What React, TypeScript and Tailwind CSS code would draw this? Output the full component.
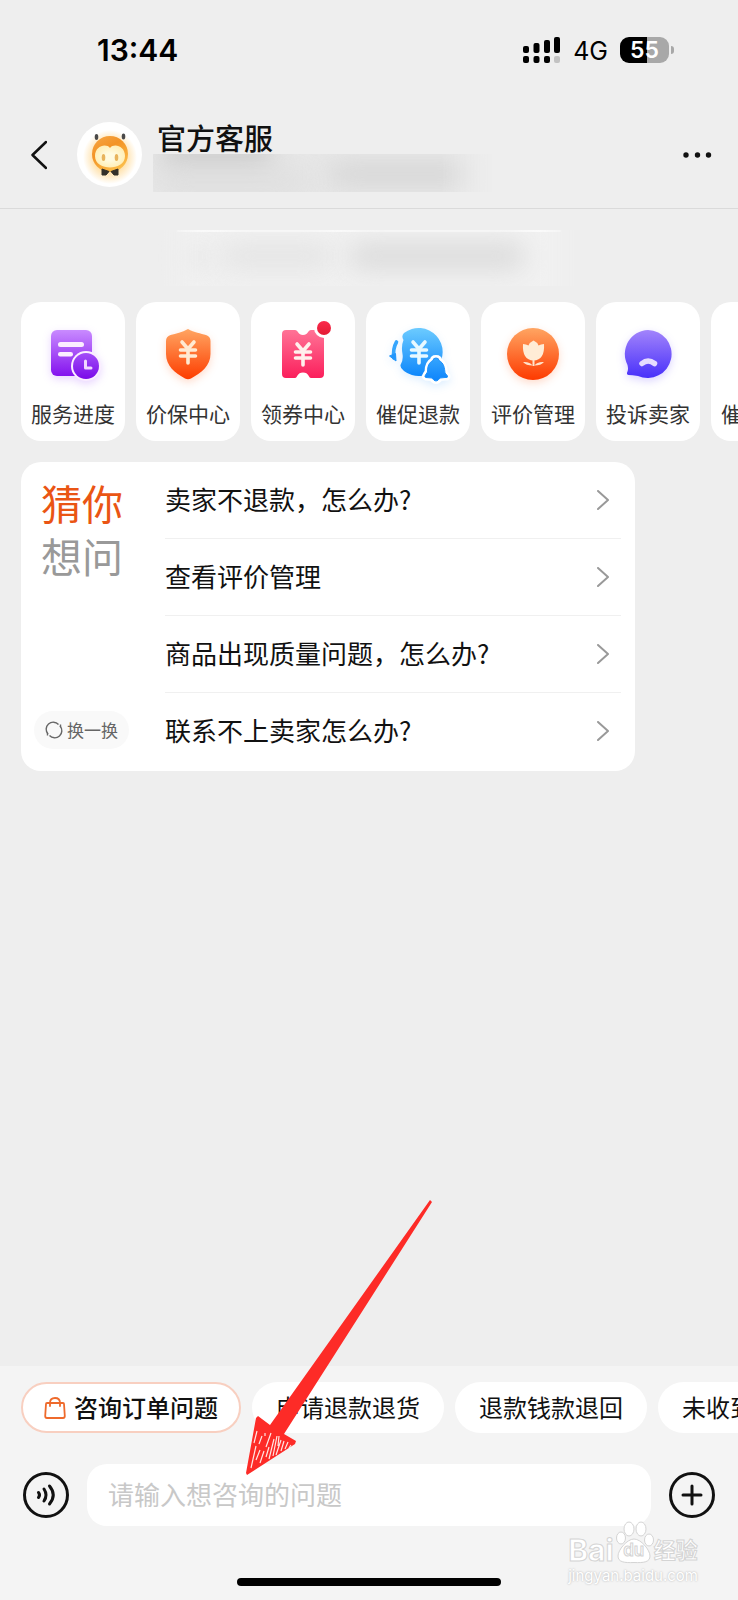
import { ReactNode, useState } from 'react'

function Yuan({ x, y, color }: { x: number; y: number; color: string }) {
  return (
    <g transform={`translate(${x} ${y})`} stroke={color} strokeWidth="3.6" strokeLinecap="round" strokeLinejoin="round" fill="none">
      <path d="M-6 -10 L0 -3 L6 -10" />
      <path d="M-7.5 -2 H7.5 M-7.5 4 H7.5 M0 -3 V11" />
    </g>
  )
}

function Gradient({ id, from, to }: { id: string; from: string; to: string }) {
  return (
    <linearGradient id={id} x1="0" y1="0" x2="0" y2="1">
      <stop offset="0" stopColor={from} />
      <stop offset="1" stopColor={to} />
    </linearGradient>
  )
}

function ServiceIcon({ children, glow }: { children: ReactNode; glow: string }) {
  return (
    <svg className={`w-16 h-16 overflow-visible ${glow}`} viewBox="0 0 64 64" fill="none" aria-hidden="true">
      {children}
    </svg>
  )
}

const services = [
  {
    label: '服务进度',
    icon: (
      <ServiceIcon glow="drop-shadow-[0_3px_4px_rgba(150,60,255,0.22)]">
        <defs>
          <Gradient id="doc" from="#c98bff" to="#8412ee" />
          <Gradient id="clock" from="#a24df8" to="#7a0be8" />
        </defs>
        <rect x="10" y="8" width="41" height="46" rx="6" fill="url(#doc)" />
        <rect x="17" y="20" width="26" height="5" rx="2.5" fill="#fbeeff" />
        <rect x="17" y="30" width="15" height="4.5" rx="2.2" fill="#fbeeff" />
        <circle cx="45" cy="44" r="15" fill="#fbeeff" />
        <circle cx="45" cy="44" r="13" fill="url(#clock)" />
        <path d="M44.5 39 V46 H50" stroke="#f0d8ff" strokeWidth="3" strokeLinecap="round" strokeLinejoin="round" />
      </ServiceIcon>
    ),
  },
  {
    label: '价保中心',
    icon: (
      <ServiceIcon glow="drop-shadow-[0_3px_4px_rgba(255,90,20,0.22)]">
        <defs>
          <Gradient id="shield" from="#ffa562" to="#fd3d00" />
        </defs>
        <path d="M32 7 C38 10.500 45 11.500 50 13 Q54.500 14.500 54.500 19 V32 C54.500 44 45 51 35 56.500 Q32 58 29 56.500 C19 51 10 44 10 32 V19 Q10 14.500 14.500 13 C20 11.500 26 10.500 32 7Z" fill="url(#shield)" />
        <Yuan x={32} y={30} color="#ffead2" />
      </ServiceIcon>
    ),
  },
  {
    label: '领券中心',
    icon: (
      <ServiceIcon glow="">
        <defs>
          <Gradient id="ticket" from="#ff7396" to="#fb1f5c" />
          <Gradient id="dot" from="#fb2a4c" to="#e31b34" />
        </defs>
        <path d="M15 8 H24 C27 8 27 13 32 13 C37 13 37 8 40 8 H49 Q53 8 53 12 V52 Q53 56 49 56 H40 C37.500 56 38 50.500 32 50.500 C26 50.500 26.500 56 24 56 H15 Q11 56 11 52 V12 Q11 8 15 8Z" fill="url(#ticket)" />
        <Yuan x={32} y={32} color="#fff0ec" />
        <circle cx="53" cy="6" r="10" fill="#fff" />
        <circle cx="53" cy="6" r="7" fill="url(#dot)" />
      </ServiceIcon>
    ),
  },
  {
    label: '催促退款',
    icon: (
      <ServiceIcon glow="drop-shadow-[0_3px_4px_rgba(30,140,255,0.15)]">
        <defs>
          <Gradient id="refund" from="#6ccbff" to="#0e87fb" />
          <Gradient id="bell" from="#35a5fd" to="#0e84fb" />
        </defs>
        <path d="M18 11 A24 24 0 1 1 18 49 Q14 46 14.500 43 Q17.500 38 16.500 32 Q15 24 17.500 18 Q15 14 18 11Z" fill="url(#refund)" />
        <path d="M10.500 20 Q6.500 27 8 36" stroke="#35a5fd" strokeWidth="3.600" strokeLinecap="round" />
        <path d="M3.500 34 L9.500 31.500 L10 39 Z" fill="#2196fc" stroke="#2196fc" strokeLinejoin="round" />
        <Yuan x={33} y={30} color="#e8f9ff" />
        <path
          d="M50 36 Q53 36 53 38.500 C58 41 58.500 46 59 51 L61.500 54 Q62 56 59 55.500 L54 56 Q50 62 46 56 L40 55.500 Q38 55 39.500 53 L41.500 50 C41.500 44 43 40.500 47 38.500 Q47 36 50 36Z"
          fill="#fff"
          stroke="#fff"
          strokeWidth="6"
        />
        <path
          d="M50 36 Q53 36 53 38.500 C58 41 58.500 46 59 51 L61.500 54 Q62 56 59 55.500 L54 56 Q50 62 46 56 L40 55.500 Q38 55 39.500 53 L41.500 50 C41.500 44 43 40.500 47 38.500 Q47 36 50 36Z"
          fill="url(#bell)"
          stroke="#1d91fc"
        />
      </ServiceIcon>
    ),
  },
  {
    label: '评价管理',
    icon: (
      <ServiceIcon glow="drop-shadow-[0_3px_4px_rgba(255,90,20,0.22)]">
        <defs>
          <Gradient id="review" from="#ffa562" to="#fd3a00" />
        </defs>
        <circle cx="32" cy="32" r="26" fill="url(#review)" />
        <path d="M22 22 Q25 22 27.500 23.500 Q29 20 32.500 18.500 Q36 20 37.500 23.500 Q40 22 43 22 Q44 38 32.500 38.500 Q21 38 22 22Z" fill="#ffecd6" />
        <path d="M32.500 38 V44" stroke="#ffe3cb" strokeWidth="2" />
        <path d="M22 40 Q29 39.500 31.500 43.500 Q25 43.500 22 40Z M43 40 Q36 39.500 33.500 43.500 Q40 43.500 43 40Z" fill="#ffe3cb" />
      </ServiceIcon>
    ),
  },
  {
    label: '投诉卖家',
    icon: (
      <ServiceIcon glow="drop-shadow-[0_3px_4px_rgba(90,60,255,0.22)]">
        <defs>
          <Gradient id="complain" from="#a284fb" to="#4830fa" />
        </defs>
        <path d="M32 8 A24 24 0 1 1 22 54 Q16 53 12.500 53 Q10 52.500 11.500 49.500 Q12.500 47 11.500 43 A24 24 0 0 1 32 8Z" fill="url(#complain)" />
        <path d="M26 41.500 Q32 36.500 38.500 41.500" stroke="#e6dcff" strokeWidth="5.500" strokeLinecap="round" />
      </ServiceIcon>
    ),
  },
  {
    label: '催促发货',
    icon: null,
  },
]

const questions = [
  '卖家不退款，怎么办?',
  '查看评价管理',
  '商品出现质量问题，怎么办?',
  '联系不上卖家怎么办?',
]

const quickReplies = ['申请退款退货', '退款钱款退回', '未收到退款']

function StatusBar() {
  return (
    <div className="flex h-[100px] items-center justify-between pl-[97px] pr-16 font-['Inter',sans-serif] text-black">
      <span className="text-[30px] font-semibold leading-9">13:44</span>
      <div className="flex items-center">
        <svg className="w-[38px] h-[26px]" viewBox="0 0 38 26" aria-hidden="true">
          <rect x="0" y="9" width="6" height="7" rx="2" />
          <rect x="10.500" y="6" width="6" height="10" rx="2" />
          <rect x="21" y="3" width="6" height="13" rx="2" />
          <rect x="31" y="0" width="6" height="16" rx="2" />
          <rect x="0" y="19" width="6" height="7" rx="2" />
          <rect x="10.500" y="19" width="6" height="7" rx="2" />
          <rect x="21" y="19" width="6" height="7" rx="2" />
          <rect x="31" y="19" width="6" height="7" rx="2" fill="#c2c2c2" />
        </svg>
        <span className="ml-3 pt-0.5 text-[25px] leading-[30px]">4G</span>
        <div className="ml-3 flex h-[26px] w-[49px] items-center justify-center rounded-[9px] bg-[linear-gradient(90deg,#000_55%,#a8a8a8_55%)] text-[23px] font-semibold leading-[26px] text-white">
          55
        </div>
        <div className="ml-0.5 h-2 w-[3px] rounded-r-full bg-[#a8a8a8]" />
      </div>
    </div>
  )
}

function Avatar() {
  return (
    <svg className="ml-[30px] w-[65px] h-[65px] shrink-0" viewBox="0 0 65 65" role="img" aria-label="官方客服">
      <defs>
        <linearGradient id="face" x1="0.1" y1="0" x2="0.7" y2="1">
          <stop offset="0" stopColor="#f6a544" />
          <stop offset="0.4" stopColor="#f39325" />
          <stop offset="1" stopColor="#fcc04c" />
        </linearGradient>
        <radialGradient id="halo">
          <stop offset="0.6" stopColor="#ffe3b0" />
          <stop offset="1" stopColor="#fff" />
        </radialGradient>
        <radialGradient id="mask">
          <stop offset="0.3" stopColor="#fffbe0" />
          <stop offset="1" stopColor="#ffefb8" />
        </radialGradient>
      </defs>
      <circle cx="32.500" cy="32.500" r="32.500" fill="#fff" />
      <circle cx="33" cy="35" r="27" fill="url(#halo)" />
      <ellipse cx="19.500" cy="15" rx="1.800" ry="3" fill="#4a4a4a" />
      <ellipse cx="46.500" cy="14.500" rx="1.800" ry="3" fill="#4a4a4a" />
      <circle cx="33" cy="32" r="18" fill="url(#face)" />
      <path d="M33 26 C29 21 18 24 18 34 C18 42 26 45.500 33 45.500 C40 45.500 48 42 48 34 C48 24 37 21 33 26Z" fill="url(#mask)" />
      <ellipse cx="26.500" cy="35.500" rx="1.800" ry="3.500" fill="#e8b45c" />
      <ellipse cx="39.500" cy="35.500" rx="1.800" ry="3.500" fill="#e8b45c" />
      <path d="M25 47 L32 49.500 L29 53 L25 53Z M41 47 L34 49.500 L37 53 L41 53Z" fill="#33302a" stroke="#33302a" strokeLinejoin="round" />
    </svg>
  )
}

function Header() {
  return (
    <header className="border-b border-[#dadada]">
      <StatusBar />
      <div className="flex h-[108px] items-start pl-[31px] pr-[26px] pt-[22px]">
        <button type="button" aria-label="返回" className="flex h-[65px] items-center">
          <svg className="w-4 h-[30px]" viewBox="0 0 16 30" fill="none" stroke="#111" strokeWidth="2.500" strokeLinecap="round" strokeLinejoin="round">
            <path d="M15 2 L1.500 15 L15 28" />
          </svg>
        </button>
        <Avatar />
        <div className="ml-[11px]">
          <h1 className="pl-1 text-[29px] font-medium leading-[30px] text-[#111]">官方客服</h1>
          <div className="relative mt-0.5 h-[38px] w-[340px] overflow-hidden bg-[#e8e8e8] [mask-image:linear-gradient(90deg,#000_85%,transparent)]">
            <div className="absolute -top-3 left-2 h-6 w-28 rounded-full bg-[#c8c8c8] blur-md" />
            <div className="absolute left-0 top-4 h-6 w-40 rounded-full bg-[#dcdcdc] blur-lg" />
            <div className="absolute left-44 top-2 h-6 w-36 rounded-full bg-[#d6d6d6] blur-md" />
          </div>
        </div>
        <button type="button" aria-label="更多" className="ml-auto flex h-[65px] items-center">
          <svg className="w-[30px] h-2" viewBox="0 0 30 8" fill="#111">
            <circle cx="4" cy="4" r="2.700" />
            <circle cx="15.500" cy="4" r="2.700" />
            <circle cx="26.500" cy="4" r="2.700" />
          </svg>
        </button>
      </div>
    </header>
  )
}

function GuessCard() {
  return (
    <section className="mx-[21px] mt-[21px] flex max-w-[614px] rounded-[20px] bg-white">
      <div className="flex w-[144px] shrink-0 flex-col items-start justify-between pb-[22px] pl-[13px] pt-3.5">
        <h2 className="pl-[7px] text-[41px] leading-[53px] text-[#999]">
          <span className="block text-[#ea5514]">猜你</span>
          想问
        </h2>
        <button type="button" className="flex h-[38px] items-center gap-1 whitespace-nowrap rounded-full bg-[#f9f9f9] px-[11px] text-[17px] text-[#666]">
          <svg className="w-[18px] h-[18px]" viewBox="0 0 18 18" fill="none" stroke="#666" strokeWidth="1.400">
            <path d="M3 13 A7 7 0 0 1 13.500 3.500 M15 5 A7 7 0 0 1 4.500 14.500" />
            <path d="M15.500 3.500 V6 M2.500 14.500 V12" />
          </svg>
          换一换
        </button>
      </div>
      <ul className="mr-3.5 flex-1 divide-y divide-[#f0f0f0] pb-0.5">
        {questions.map((question) => (
          <li key={question}>
            <button type="button" className="flex h-[76px] w-full items-center justify-between pr-3 text-left text-[26px] text-[#111]">
              <span className="pb-1">{question}</span>
              <svg className="w-3 h-5" viewBox="0 0 12 20" fill="none" stroke="#999" strokeWidth="2" strokeLinecap="round" strokeLinejoin="round">
                <path d="M1 1 L11 10 L1 19" />
              </svg>
            </button>
          </li>
        ))}
      </ul>
    </section>
  )
}

function PointerArrow() {
  return (
    <svg className="pointer-events-none absolute -top-[170px] left-[240px] w-[200px] h-[290px]" viewBox="240 1196 200 290" fill="none" aria-hidden="true">
      <path
        d="M430 1200 L432 1202 L284 1434 L296 1441 L295 1444 L247 1475 L246 1473 L256 1418 L258 1416 L270 1425Z"
        fill="#fd2b27"
      />
      <path
        d="M257 1431 L254 1443 M262 1436 L259 1444 M265 1433 L265 1436 M271 1433 L266 1447 M256 1446 L251 1468 M260 1450 L256 1460 M264 1451 L260 1463 M269 1447 L266 1457 M274 1439 L269 1459 M277 1436 L273 1456 M281 1440 L276 1455 M279 1436 L278 1446 M284 1441 L281 1451 M288 1442 L285 1449 M291 1445 L289 1448"
        stroke="#ffe5e3"
        strokeWidth="1.200"
      />
    </svg>
  )
}

function Watermark() {
  return (
    <div className="pointer-events-none absolute right-10 top-[154px] font-['Inter','Noto_Sans_CJK_SC',sans-serif] text-white">
      <div className="flex h-11 items-end [-webkit-text-stroke:1px_#d4d4d4]">
        <span className="text-[30px] font-bold leading-7">Bai</span>
        <div className="relative h-11 w-[40px]">
          <svg className="absolute inset-0 w-[40px] h-11" viewBox="0 0 40 44" fill="#fff" stroke="#d4d4d4" aria-hidden="true">
            <ellipse cx="7" cy="18" rx="4.500" ry="6" />
            <ellipse cx="15" cy="9" rx="5" ry="7" />
            <ellipse cx="27" cy="9" rx="5" ry="7" />
            <ellipse cx="35" cy="20" rx="4.500" ry="6" />
            <path d="M20 19 C27 19 36 30 36 36 C36 42 30 43 20 42.500 C10 43 4 42 4 36 C4 30 13 19 20 19Z" />
          </svg>
          <span className="absolute inset-x-0 bottom-1 text-center text-[17px] font-semibold leading-5">du</span>
        </div>
        <span className="text-[22px] font-bold leading-7">经验</span>
      </div>
      <div className="text-[15px] leading-6 [text-shadow:0_0_2px_#aaa]">jingyan.baidu.com</div>
    </div>
  )
}

function Footer() {
  const [message, setMessage] = useState('')

  return (
    <footer className="relative bg-[#f4f4f4] pt-4">
      <div className="flex gap-[11px] overflow-hidden pl-[21px] text-[24px] text-[#111]">
        <button type="button" className="flex h-[51px] shrink-0 items-center gap-2 rounded-full border-2 border-[#f8cfc0] bg-white px-[21px] font-medium">
          <svg className="w-[22px] h-6" viewBox="0 0 22 24" fill="none" stroke="#ee6a2c" strokeWidth="1.800" strokeLinejoin="round" strokeLinecap="round">
            <path d="M3 7 H19 Q20 7 20 8 L20.800 20 Q20.800 22 19 22 H3 Q1.200 22 1.200 20 L2 8 Q2 7 3 7Z" />
            <path d="M6 10 V7 Q6 2 11 2 Q16 2 16 7 V10" />
          </svg>
          <span className="pb-0.5">咨询订单问题</span>
        </button>
        {quickReplies.map((reply) => (
          <button key={reply} type="button" className="h-[51px] shrink-0 rounded-full bg-white px-6 pb-0.5">
            {reply}
          </button>
        ))}
      </div>

      <div className="mt-[31px] flex items-center px-[23px]">
        <button type="button" aria-label="语音输入" className="shrink-0">
          <svg className="w-[46px] h-[46px]" viewBox="0 0 46 46" fill="none" stroke="#111" strokeWidth="3" strokeLinecap="round">
            <circle cx="23" cy="23" r="21.500" />
            <path d="M15.500 20.500 Q17.500 23 15.500 25.500" />
            <path d="M21 17 Q25 23 21 29" />
            <path d="M26.500 14 Q34 23 26.500 32" />
          </svg>
        </button>
        <input
          type="text"
          aria-label="请输入想咨询的问题"
          placeholder="请输入想咨询的问题"
          value={message}
          onChange={(e) => setMessage(e.target.value)}
          className="mx-[18px] h-[62px] min-w-0 flex-1 rounded-[20px] bg-white px-[21px] pb-1 text-[26px] text-[#111] outline-none placeholder:text-[#c8c8c8]"
        />
        <button type="button" aria-label="添加" className="shrink-0">
          <svg className="w-[46px] h-[46px]" viewBox="0 0 46 46" fill="none" stroke="#111" strokeWidth="3" strokeLinecap="round">
            <circle cx="23" cy="23" r="21.500" />
            <path d="M23 14 V32 M14 23 H32" />
          </svg>
        </button>
      </div>

      <div className="mx-auto mb-3.5 mt-[52px] h-2 w-[264px] rounded-full bg-black" />
      <Watermark />
      <PointerArrow />
    </footer>
  )
}

export default function App() {
  return (
    <div className="flex min-h-screen flex-col overflow-hidden bg-[#eee] font-['Noto_Sans_CJK_SC',sans-serif]">
      <Header />
      <main className="flex-1 pt-[21px]">
        {/* 打码的系统提示 */}
        <div className="relative mx-auto h-[56px] w-[424px] overflow-hidden bg-[#f1f1f1] [mask-image:linear-gradient(90deg,transparent,#000_10%,#000_90%,transparent)]">
          <div className="mx-5 h-0.5 rounded-full bg-[#fbfbfb]" />
          <div className="absolute left-6 top-4 h-6 w-8 rounded-full bg-[#e9e9e9] blur-md" />
          <div className="absolute left-16 top-3 h-7 w-28 rounded-full bg-[#e5e5e5] blur-md" />
          <div className="absolute left-48 top-3 h-7 w-44 rounded-full bg-[#dcdcdc] blur-md" />
        </div>

        <nav className="mt-4 flex gap-[11px] overflow-hidden pl-[21px]">
          {services.map((service) => (
            <button
              key={service.label}
              type="button"
              className="flex h-[139px] w-[104px] shrink-0 flex-col items-center rounded-[20px] bg-white pt-5"
            >
              <span className="h-16 w-16">{service.icon}</span>
              <span className="mt-3 whitespace-nowrap text-[21px] leading-[30px] text-[#333]">{service.label}</span>
            </button>
          ))}
        </nav>

        <GuessCard />
      </main>
      <Footer />
    </div>
  )
}
